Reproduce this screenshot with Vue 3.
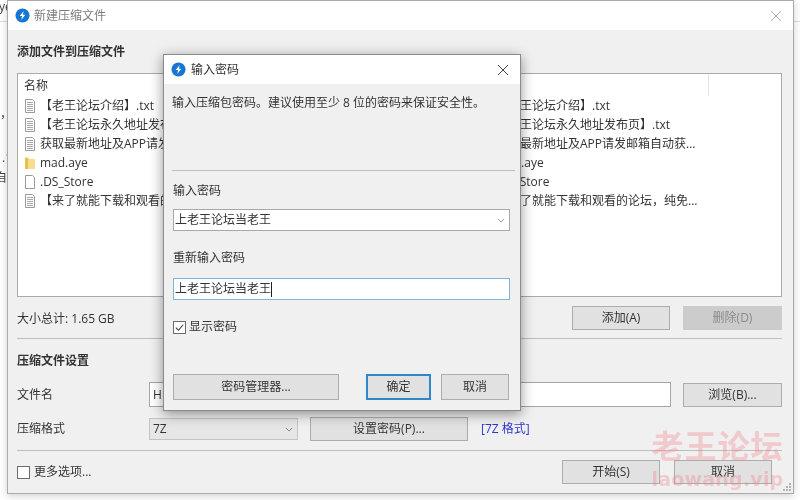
<script setup>
const rows = [
  { name: '【老王论坛介绍】.txt', icon: 'text' },
  { name: '【老王论坛永久地址发布页】.txt', icon: 'text' },
  { name: '获取最新地址及APP请发邮箱自动获...', icon: 'text' },
  { name: 'mad.aye', icon: 'folder' },
  { name: '.DS_Store', icon: 'blank' },
  { name: '【来了就能下载和观看的论坛，纯免...', icon: 'text' }
]
</script>

<template>
  <div class="desktop">
    <span class="bg-bit bit-a">ye</span>
    <span class="bg-bit bit-b">，</span>
    <span class="bg-bit bit-c">.1</span>
    <span class="bg-bit bit-d">自</span>
    <div class="bg-line line-right"></div>
    <div class="bg-line line-left"></div>

    <section class="window main-win">
      <header class="titlebar">
        <svg class="logo" viewBox="0 0 16 16"><circle cx="8" cy="8" r="7.5" fill="#1677d2"/><path d="M9.2 3.2 5 8.6h2.6L6.6 12.8 11 7.3H8.4z" fill="#fff"/></svg>
        <span class="title-muted">新建压缩文件</span>
        <svg class="close muted" viewBox="0 0 12 12"><path d="M1 1l10 10M11 1L1 11" stroke="currentColor" fill="none"/></svg>
      </header>
      <div class="main-body">
        <h2 class="heading first">添加文件到压缩文件</h2>
        <div class="listbox">
          <div class="list-head"><span class="head-name">名称</span></div>
          <div v-for="r in rows" :key="r.name" class="row">
            <div class="name-col">
              <svg v-if="r.icon === 'folder'" class="file-icon" viewBox="0 0 12 14"><path d="M1 1.5h3.5l1 1.5H11v10H1z" fill="#f6dd90"/><path d="M1 2h3v11H1z" fill="#e9bf48"/></svg>
              <svg v-else class="file-icon" viewBox="0 0 12 14"><path d="M1.5.5h7l2 2v11h-9z" fill="#fff" stroke="#9a9a9a"/><path v-if="r.icon === 'text'" d="M3 3.5h6M3 5.5h6M3 7.5h6M3 9.5h6M3 11.5h6" stroke="#a8a8a8"/></svg>
              <span>{{ r.name }}</span>
            </div>
            <span class="path-col">{{ r.name }}</span>
          </div>
        </div>
        <div class="size-row">
          <span class="grow total">大小总计: 1.65 GB</span>
          <button class="btn slim">添加(A)</button>
          <button class="btn wide disabled">删除(D)</button>
        </div>
        <div class="rule rule-one"></div>
        <h2 class="heading second">压缩文件设置</h2>
        <div class="form-row name-row">
          <span class="label">文件名</span>
          <div class="field name-field">H</div>
          <button class="btn wide">浏览(B)...</button>
        </div>
        <div class="form-row format-row">
          <span class="label">压缩格式</span>
          <div class="combo gray">
            <span>7Z</span>
            <svg class="chev" viewBox="0 0 10 6"><path d="M1 1l4 4 4-4" stroke="#6e6e6e" fill="none"/></svg>
          </div>
          <button class="btn pass-btn">设置密码(P)...</button>
          <span class="link">[7Z 格式]</span>
        </div>
        <div class="rule rule-two"></div>
        <div class="footer">
          <label class="check-row more">
            <span class="box"></span>
            <span>更多选项...</span>
          </label>
          <span class="grow"></span>
          <button class="btn slim">开始(S)</button>
          <button class="btn slim">取消</button>
        </div>
      </div>
      <svg class="grip" viewBox="0 0 8 8"><path d="M6 0h2v2H6zM3 3h2v2H3zM6 3h2v2H6zM0 6h2v2H0zM3 6h2v2H3zM6 6h2v2H6z" fill="#b4b4b4"/></svg>
    </section>

    <section class="window dialog">
      <header class="titlebar small">
        <svg class="logo" viewBox="0 0 16 16"><circle cx="8" cy="8" r="7.5" fill="#1677d2"/><path d="M9.2 3.2 5 8.6h2.6L6.6 12.8 11 7.3H8.4z" fill="#fff"/></svg>
        <span>输入密码</span>
        <svg class="close" viewBox="0 0 12 12"><path d="M1 1l10 10M11 1L1 11" stroke="currentColor" fill="none"/></svg>
      </header>
      <div class="dialog-body">
        <p class="hint">输入压缩包密码。建议使用至少 8 位的密码来保证安全性。</p>
        <div class="rule dialog-rule"></div>
        <div class="field-label pw-label">输入密码</div>
        <div class="combo white">
          <span>上老王论坛当老王</span>
          <svg class="chev" viewBox="0 0 10 6"><path d="M1 1l4 4 4-4" stroke="#7a7a7a" fill="none"/></svg>
        </div>
        <div class="field-label again-label">重新输入密码</div>
        <div class="combo focus"><span>上老王论坛当老王</span><i class="caret"></i></div>
        <label class="check-row show-row">
          <span class="box">
            <svg viewBox="0 0 12 12"><path d="M2 6.2l2.8 2.8L10 3" stroke="#333" stroke-width="1.1" fill="none"/></svg>
          </span>
          <span>显示密码</span>
        </label>
        <div class="dialog-actions">
          <button class="btn manager">密码管理器...</button>
          <button class="btn ok">确定</button>
          <button class="btn cancel">取消</button>
        </div>
      </div>
    </section>

    <div class="watermark">
      <div class="wm-cn">老王论坛</div>
      <div class="wm-en">laowang.vip</div>
    </div>
  </div>
</template>

<style>
html, body { margin: 0; background: #fff; }
</style>

<style scoped>
.desktop {
  position: relative;
  width: 800px;
  height: 500px;
  overflow: hidden;
  background: #fff;
  color: #333;
  font: 12px/16px "Open Sans", "Noto Sans CJK SC", sans-serif;
  filter: blur(0.4px);
}
.bg-bit { position: absolute; left: 0; color: #444; }
.bit-a { top: -1px; left: -1px; }
.bit-b { top: 106px; left: 0; }
.bit-c { top: 150px; left: 2px; }
.bit-d { top: 170px; left: -5px; }
.bg-line { position: absolute; top: 21px; height: 1px; background: #ddd; }
.line-right { left: 793px; width: 7px; }
.line-left { left: 0; width: 7px; }

.window { position: absolute; background: #f0f0f0; box-sizing: border-box; }
.main-win {
  left: 7px; top: 0; width: 787px; height: 494px;
  border: 1px solid #aaa;
  box-shadow: 0 2px 8px rgba(0,0,0,.18);
}
.dialog {
  left: 163px; top: 54px; width: 358px; height: 357px;
  border: 1px solid #8a8a8a;
  box-shadow: 0 3px 12px rgba(0,0,0,.42);
}
.titlebar {
  display: flex; align-items: center; gap: 4px;
  height: 29px; padding: 0 11px 0 7px;
  background: #fff;
}
.titlebar.small { gap: 5px; }
.logo { width: 15px; height: 15px; flex: none; }
.title-muted { color: #7d7d7d; }
.close { width: 12px; height: 12px; margin-left: auto; color: #444; }
.close.muted { color: #a8a8a8; }

.main-body { display: flex; flex-direction: column; padding: 0 11px 0 9px; }
.heading { margin: 0; font-size: 12px; line-height: 16px; font-weight: 700; color: #333; }
.heading.first { margin-top: 14px; }
.heading.second { margin-top: 14px; }

.listbox {
  box-sizing: border-box;
  height: 224px; margin-top: 13px;
  background: #fff; border: 1px solid #aaa;
}
.list-head { height: 22px; display: flex; align-items: center; padding-left: 6px; }
.head-name { flex: none; width: 684px; height: 22px; line-height: 23px; border-right: 1px solid #e4e4e4; }
.row { display: flex; align-items: center; height: 19px; padding-left: 6px; white-space: nowrap; }
.name-col { display: flex; align-items: center; gap: 4px; flex: none; width: 472px; overflow: hidden; }
.path-col { flex: none; }
.file-icon { width: 12px; height: 14px; flex: none; }

.size-row { display: flex; align-items: center; gap: 13px; margin-top: 9px; }
.total { padding-top: 1px; }
.grow { flex: 1; }
.btn {
  box-sizing: border-box; height: 24px; padding: 0;
  background: #e1e1e1; border: 1px solid #adadad; color: #333;
  font: inherit;
}
.wide { width: 99px; }
.slim { width: 98px; }
.btn.disabled { background: #cccccc; border-color: #cccccc; color: #8a8a8a; }
.rule { height: 1px; background: #bdbdbd; }
.rule-one { margin-top: 8px; }

.form-row { display: flex; align-items: center; }
.name-row { margin-top: 13px; }
.format-row { margin-top: 10px; }
.label { width: 132px; flex: none; }
.name-row .label { padding-top: 1px; }
.field {
  box-sizing: border-box; display: flex; align-items: center;
  background: #fff; border: 1px solid #a5a5a5; padding-left: 3px;
}
.name-field { width: 522px; height: 25px; margin-right: 12px; }
.combo {
  box-sizing: border-box; display: flex; align-items: center; justify-content: space-between;
  height: 22px; padding: 0 4px 0 2px;
}
.combo.gray { width: 149px; margin-right: 12px; background: #e6e6e6; border: 1px solid #c4c4c4; padding-left: 3px; }
.combo.white { background: #fff; border: 1px solid #a8a8a8; padding-left: 1px; }
.combo.focus { justify-content: flex-start; background: #fff; border: 1px solid #7eb4dc; padding-left: 1px; }
.chev { width: 8px; height: 5px; }
.pass-btn { width: 158px; margin-right: 13px; }
.link { color: #2f35d0; }
.rule-two { margin-top: 9px; }

.footer { display: flex; align-items: center; gap: 14px; height: 24px; margin-top: 9px; padding-right: 10px; }
.check-row { display: flex; align-items: center; gap: 3px; }
.check-row.more { gap: 4px; }
.box {
  box-sizing: border-box; display: block; flex: none;
  width: 13px; height: 13px; background: #fff; border: 1px solid #6c6c6c;
}
.box svg { display: block; width: 11px; height: 11px; }
.grip { position: absolute; right: 2px; bottom: 2px; width: 8px; height: 8px; }

.dialog-body { display: flex; flex-direction: column; padding: 0 5px 0 9px; }
.hint { margin: 11px 0 0 -1px; }
.dialog-rule { margin-top: 59px; margin-left: -1px; }
.pw-label { margin-top: 12px; }
.combo.white, .combo.focus { margin-right: 5px; }
.combo.white { margin-top: 10px; }
.again-label { margin-top: 19px; }
.combo.focus { margin-top: 12px; }
.caret { width: 1px; height: 15px; background: #222; }
.show-row { margin-top: 19px; }
.dialog-actions { display: flex; margin-top: 39px; margin-right: 5px; }
.manager { width: 166px; height: 26px; margin-right: 27px; }
.ok { width: 65px; height: 26px; margin-right: 10px; border: 2px solid #2f86c9; }
.cancel { width: 68px; height: 26px; }

.watermark {
  position: absolute; left: 650px; top: 428px; width: 135px;
  text-align: center; color: rgba(243, 120, 135, .32);
  pointer-events: none;
}
.wm-cn { font-size: 32px; line-height: 36px; font-weight: 700; letter-spacing: 1px; }
.wm-en { font-family: "DejaVu Sans", sans-serif; font-size: 19px; line-height: 24px; font-weight: 700; margin-top: 3px; letter-spacing: .2px; }
</style>
